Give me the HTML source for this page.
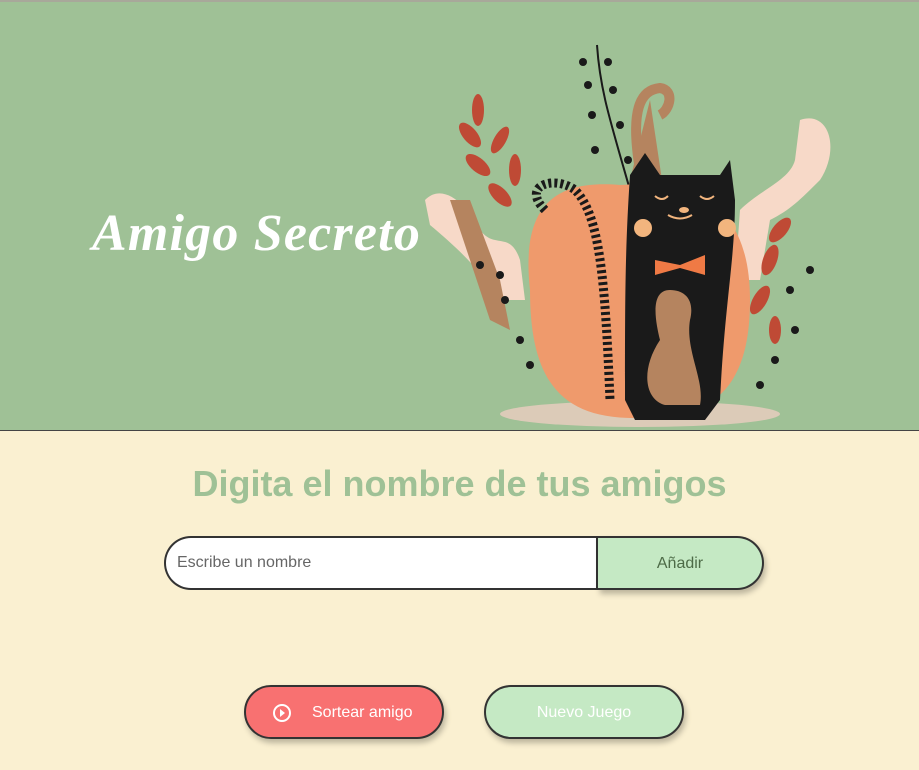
<!DOCTYPE html>
<html><head><meta charset="utf-8"><style>
body{margin:0;width:919px;height:770px;overflow:hidden;background:#faf0d1;font-family:"Liberation Sans",sans-serif}
.hdr{position:absolute;left:0;top:0;width:919px;height:431px;background:#9fc196;border-top:2px solid #a8a89a;box-sizing:border-box;border-bottom:1px solid #444}
h1{position:absolute;left:92px;top:204px;margin:0;font:italic bold 52px "Liberation Serif",serif;color:#fff;letter-spacing:1.2px}
h2{position:absolute;left:0;width:919px;top:463px;margin:0;text-align:center;font:bold 36px "Liberation Sans",sans-serif;color:#9fc196}
.inp{position:absolute;left:164px;top:536px;width:436px;height:54px;box-sizing:border-box;border:2px solid #333;border-right:4px solid #333;border-radius:27px 0 0 27px;background:#fff;font-size:16px;color:#666;padding:16px 0 0 11px}
.add{position:absolute;left:598px;top:536px;width:166px;height:54px;box-sizing:border-box;border:2px solid #333;border-left:none;border-radius:0 27px 27px 0;background:#c5e9c4;font-size:16px;color:#4d6b47;text-align:center;line-height:52px;box-shadow:2px 4px 6px rgba(0,0,0,.25)}
.b{position:absolute;top:685px;width:200px;height:54px;box-sizing:border-box;border:2px solid #333;border-radius:27px;font-size:16px;color:#fff;line-height:52px;box-shadow:2px 4px 6px rgba(0,0,0,.25)}
</style></head><body>
<div class="hdr"></div>
<h1>Amigo Secreto</h1>
<svg style="position:absolute;left:0;top:0" width="919" height="431">
<ellipse cx="640" cy="414" rx="140" ry="13" fill="#dccbb8"/>
<path d="M425 200 C445 180 470 210 480 230 C495 250 510 230 520 260 L525 300 L500 300 C480 270 460 250 430 225 Z" fill="#f7d9c8"/>
<path d="M470 200 L500 280 L510 330 L490 320 L450 200 Z" fill="#b5845f"/>
<path d="M800 120 C830 110 840 150 820 180 C800 200 790 210 770 220 L760 280 L735 280 L740 210 C760 190 790 180 795 160 Z" fill="#f7d9c8"/>
<g fill="#bf4a35">
<ellipse cx="478" cy="110" rx="6" ry="16"/><ellipse cx="470" cy="135" rx="7" ry="15" transform="rotate(-40 470 135)"/><ellipse cx="500" cy="140" rx="6" ry="15" transform="rotate(30 500 140)"/><ellipse cx="478" cy="165" rx="7" ry="15" transform="rotate(-50 478 165)"/><ellipse cx="515" cy="170" rx="6" ry="16"/><ellipse cx="500" cy="195" rx="7" ry="15" transform="rotate(-45 500 195)"/>
<ellipse cx="780" cy="230" rx="7" ry="15" transform="rotate(40 780 230)"/><ellipse cx="770" cy="260" rx="7" ry="16" transform="rotate(20 770 260)"/><ellipse cx="760" cy="300" rx="7" ry="16" transform="rotate(30 760 300)"/><ellipse cx="775" cy="330" rx="6" ry="14"/>
</g>
<path d="M597 45 C600 90 610 120 630 190" stroke="#1a1a1a" stroke-width="2" fill="none"/>
<g fill="#1a1a1a"><circle cx="583" cy="62" r="4"/><circle cx="608" cy="62" r="4"/><circle cx="588" cy="85" r="4"/><circle cx="613" cy="90" r="4"/><circle cx="592" cy="115" r="4"/><circle cx="620" cy="125" r="4"/><circle cx="595" cy="150" r="4"/><circle cx="628" cy="160" r="4"/>
<circle cx="480" cy="265" r="4"/><circle cx="500" cy="275" r="4"/><circle cx="505" cy="300" r="4"/><circle cx="520" cy="340" r="4"/><circle cx="530" cy="365" r="4"/>
<circle cx="810" cy="270" r="4"/><circle cx="790" cy="290" r="4"/><circle cx="795" cy="330" r="4"/><circle cx="775" cy="360" r="4"/><circle cx="760" cy="385" r="4"/></g>
<path d="M640 170 C630 110 640 90 660 88 C675 90 670 110 660 115" stroke="#b5845f" stroke-width="10" fill="none"/>
<path d="M625 200 L650 100 L665 200 Z" fill="#b5845f"/>
<path d="M530 290 C520 200 560 180 620 185 C690 180 750 200 750 300 C750 380 720 420 640 418 C560 420 530 380 530 290 Z" fill="#ef9a6c"/>
<path d="M545 210 C520 185 555 175 575 190 C600 215 605 280 610 400" stroke="#1a1a1a" stroke-width="9" stroke-dasharray="3 3" fill="none"/>
<path d="M630 175 L645 153 L660 175 L720 175 L730 160 L735 200 C735 260 725 300 720 400 L705 420 L635 420 L625 400 C625 300 625 250 630 175 Z" fill="#1a1a1a"/>
<path d="M670 290 C650 290 655 320 660 340 C640 370 645 400 665 405 L700 405 C705 380 685 350 690 320 C695 300 685 290 670 290 Z" fill="#b5845f"/>
<circle cx="643" cy="228" r="9" fill="#f2b57e"/><circle cx="727" cy="228" r="9" fill="#f2b57e"/>
<path d="M655 260 L680 265 L705 255 L705 275 L680 268 L655 275 Z" fill="#ef7a45"/>
<path d="M655 196 Q662 202 668 196 M700 196 Q707 202 714 196 M668 215 Q680 222 692 215" stroke="#f2b57e" stroke-width="2" fill="none"/>
<ellipse cx="684" cy="210" rx="5" ry="3" fill="#f2b57e"/>
</svg>
<h2>Digita el nombre de tus amigos</h2>
<div class="inp">Escribe un nombre</div>
<div class="add">Añadir</div>
<div class="b" style="left:244px;background:#f87171"><svg style="position:absolute;left:26px;top:16px" width="20" height="20"><circle cx="10" cy="10" r="8" stroke="#fff" stroke-width="2" fill="none"/><path d="M8 6 L13 10 L8 14 Z" fill="#fff"/></svg><span style="position:absolute;left:66px">Sortear amigo</span></div>
<div class="b" style="left:484px;background:#c5e9c4;text-align:center">Nuevo Juego</div>
</body></html>
